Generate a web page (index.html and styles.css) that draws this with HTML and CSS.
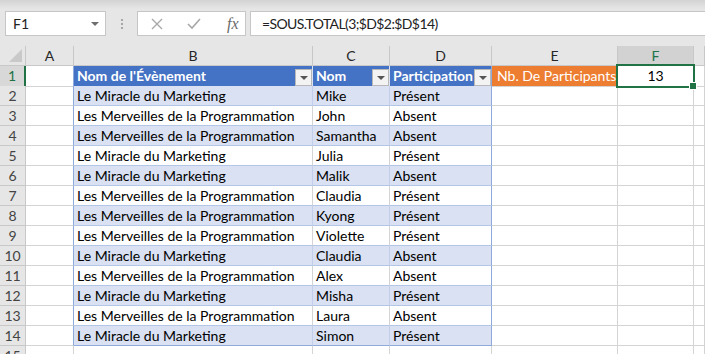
FILE: index.html
```html
<!DOCTYPE html>
<html lang="fr">
<head>
  <meta charset="UTF-8">
  <title>Participants</title>
  <link rel="stylesheet" href="styles.css">
</head>
<body>
  <div class="formula-bar">
    <div class="name-box">
      <span>F1</span>
      <span class="caret"></span>
    </div>
    <div class="grip"><i></i><i></i><i></i></div>
    <div class="fx-buttons">
      <svg class="fx-icon" width="12" height="12" viewBox="0 0 12 12"><path d="M1 1 L11 11 M11 1 L1 11" stroke="#a8a8a8" stroke-width="1.4" fill="none"/></svg>
      <svg class="fx-icon" width="14" height="12" viewBox="0 0 14 12"><path d="M1 6 L5 10 L13 1" stroke="#a8a8a8" stroke-width="1.6" fill="none"/></svg>
      <span class="fx-label">fx</span>
    </div>
    <div class="formula-input">=SOUS.TOTAL(3;$D$2:$D$14)</div>
  </div>

  <div class="sheet">
    <div class="row col-heads">
      <div class="corner"><span class="corner-mark"></span></div>
      <div>A</div><div>B</div><div>C</div><div>D</div><div>E</div><div class="active">F</div><div></div>
    </div>

    <div class="row">
      <div class="rh active">1</div><div class="edge"></div>
      <div class="th">Nom de l'Évènement<span class="filter"></span></div>
      <div class="th">Nom<span class="filter"></span></div>
      <div class="th last">Participation<span class="filter"></span></div>
      <div class="label">Nb. De Participants</div>
      <div class="result">13</div><div></div>
    </div>

    <div class="row band"><div class="rh">2</div><div class="edge"></div><div class="td">Le Miracle du Marketing</div><div class="td">Mike</div><div class="td last">Présent</div><div></div><div></div><div></div></div>
    <div class="row"><div class="rh">3</div><div class="edge"></div><div class="td">Les Merveilles de la Programmation</div><div class="td">John</div><div class="td last">Absent</div><div></div><div></div><div></div></div>
    <div class="row band"><div class="rh">4</div><div class="edge"></div><div class="td">Les Merveilles de la Programmation</div><div class="td">Samantha</div><div class="td last">Absent</div><div></div><div></div><div></div></div>
    <div class="row"><div class="rh">5</div><div class="edge"></div><div class="td">Le Miracle du Marketing</div><div class="td">Julia</div><div class="td last">Présent</div><div></div><div></div><div></div></div>
    <div class="row band"><div class="rh">6</div><div class="edge"></div><div class="td">Le Miracle du Marketing</div><div class="td">Malik</div><div class="td last">Absent</div><div></div><div></div><div></div></div>
    <div class="row"><div class="rh">7</div><div class="edge"></div><div class="td">Les Merveilles de la Programmation</div><div class="td">Claudia</div><div class="td last">Présent</div><div></div><div></div><div></div></div>
    <div class="row band"><div class="rh">8</div><div class="edge"></div><div class="td">Les Merveilles de la Programmation</div><div class="td">Kyong</div><div class="td last">Présent</div><div></div><div></div><div></div></div>
    <div class="row"><div class="rh">9</div><div class="edge"></div><div class="td">Les Merveilles de la Programmation</div><div class="td">Violette</div><div class="td last">Présent</div><div></div><div></div><div></div></div>
    <div class="row band"><div class="rh">10</div><div class="edge"></div><div class="td">Le Miracle du Marketing</div><div class="td">Claudia</div><div class="td last">Absent</div><div></div><div></div><div></div></div>
    <div class="row"><div class="rh">11</div><div class="edge"></div><div class="td">Les Merveilles de la Programmation</div><div class="td">Alex</div><div class="td last">Absent</div><div></div><div></div><div></div></div>
    <div class="row band"><div class="rh">12</div><div class="edge"></div><div class="td">Le Miracle du Marketing</div><div class="td">Misha</div><div class="td last">Présent</div><div></div><div></div><div></div></div>
    <div class="row"><div class="rh">13</div><div class="edge"></div><div class="td">Les Merveilles de la Programmation</div><div class="td">Laura</div><div class="td last">Absent</div><div></div><div></div><div></div></div>
    <div class="row band bottom"><div class="rh">14</div><div class="edge"></div><div class="td">Le Miracle du Marketing</div><div class="td">Simon</div><div class="td last">Présent</div><div></div><div></div><div></div></div>
    <div class="row"><div class="rh">15</div><div></div><div></div><div></div><div></div><div></div><div></div><div></div></div>
  </div>
</body>
</html>
```

FILE: styles.css
```css
body {
  margin: 0;
  width: 705px;
  height: 354px;
  overflow: hidden;
  background: #fff;
  font-family: Lato, "Open Sans", sans-serif;
  font-size: 14px;
  color: #000;
}

/* formula bar */

.formula-bar {
  height: 46px;
  box-sizing: border-box;
  padding-top: 11px;
  display: flex;
  align-items: flex-start;
  background: linear-gradient(#d3d3d3, #e6e6e6 9px);
}

.name-box {
  margin-left: 5px;
  width: 101px;
  height: 25px;
  box-sizing: border-box;
  border: 1px solid #c6c6c6;
  background: #fff;
  display: flex;
  align-items: center;
  justify-content: space-between;
  padding: 0 6px 0 7px;
  color: #222;
}

.caret {
  width: 0;
  height: 0;
  border-left: 4px solid transparent;
  border-right: 4px solid transparent;
  border-top: 4px solid #6e6e6e;
}

.grip {
  width: 31px;
  height: 25px;
  display: flex;
  flex-direction: column;
  align-items: center;
  justify-content: center;
  gap: 2px;
}

.grip i {
  width: 2px;
  height: 2px;
  background: #a6a6a6;
}

.fx-buttons {
  width: 109px;
  height: 25px;
  box-sizing: border-box;
  border: 1px solid #c6c6c6;
  background: #fff;
  display: flex;
  align-items: center;
  padding-left: 13px;
  gap: 24px;
}

.fx-label {
  font-family: "Liberation Serif", serif;
  font-style: italic;
  font-size: 16px;
  color: #6a6a6a;
  margin-left: 2px;
}

.formula-input {
  margin-left: 4px;
  margin-right: -2px;
  flex: 1;
  height: 25px;
  box-sizing: border-box;
  border: 1px solid #c6c6c6;
  background: #fff;
  padding-left: 11px;
  line-height: 23px;
  letter-spacing: -0.6px;
  color: #222;
}

/* grid */

.row {
  display: grid;
  grid-template-columns: 26px 48px 239px 77px 102px 126px 76px 1fr;
  height: 20px;
}

.row > div {
  box-sizing: border-box;
  border-right: 1px solid #d4d4d4;
  border-bottom: 1px solid #d4d4d4;
  padding: 0 3px;
  line-height: 20px;
  white-space: nowrap;
  overflow: hidden;
}

.col-heads > div {
  background: #e6e6e6;
  border-right-color: #c8c8c8;
  border-bottom-color: #c8c8c8;
  text-align: center;
  color: #262626;
}

.col-heads .active {
  background: #d2d2d2;
  color: #217346;
}

.col-heads .corner {
  position: relative;
}

.corner-mark {
  position: absolute;
  right: 3px;
  bottom: 3px;
  width: 0;
  height: 0;
  border-left: 13px solid transparent;
  border-bottom: 13px solid #c9c9c9;
}

.row > .rh {
  background: #e6e6e6;
  border-right-color: #c8c8c8;
  border-bottom-color: #c8c8c8;
  text-align: center;
  color: #444;
  padding: 0;
}

.row > .rh.active {
  background: #d8d8d8;
  color: #217346;
  border-right: 2px solid #217346;
}

.row > .edge {
  border-right-color: #8ea9db;
}

.row > .th {
  background: #4472c4;
  color: #fff;
  font-weight: bold;
  border-right-color: #dbe3f3;
  border-bottom-color: #8ea9db;
  display: flex;
  justify-content: space-between;
  padding-right: 0;
}

.row > .th.last,
.row > .td.last {
  border-right-color: #8ea9db;
}

.filter {
  align-self: flex-end;
  width: 17px;
  height: 17px;
  box-sizing: border-box;
  border: 1px solid #b8b8b8;
  background: #f3f3f3;
  display: flex;
  align-items: center;
  justify-content: center;
}

.filter::after {
  content: "";
  border-left: 4px solid transparent;
  border-right: 4px solid transparent;
  border-top: 4px solid #555;
}

.row > .td {
  border-bottom-color: #b4c6e7;
}

.band > .td {
  background: #d9e1f2;
  border-right-color: #c3cfea;
}

.bottom > .td {
  border-bottom-color: #8ea9db;
}

.row > .label {
  background: #ed7d31;
  color: #fff;
  padding-left: 5px;
}

.row > .result {
  position: relative;
  text-align: center;
  overflow: visible;
}

.result::after {
  content: "";
  position: absolute;
  left: -2px;
  top: -2px;
  right: -2px;
  bottom: -2px;
  border: 2px solid #217346;
}

.result::before {
  content: "";
  position: absolute;
  right: -4px;
  bottom: -4px;
  width: 6px;
  height: 6px;
  background: #217346;
  border: 1px solid #fff;
  z-index: 1;
}
```
